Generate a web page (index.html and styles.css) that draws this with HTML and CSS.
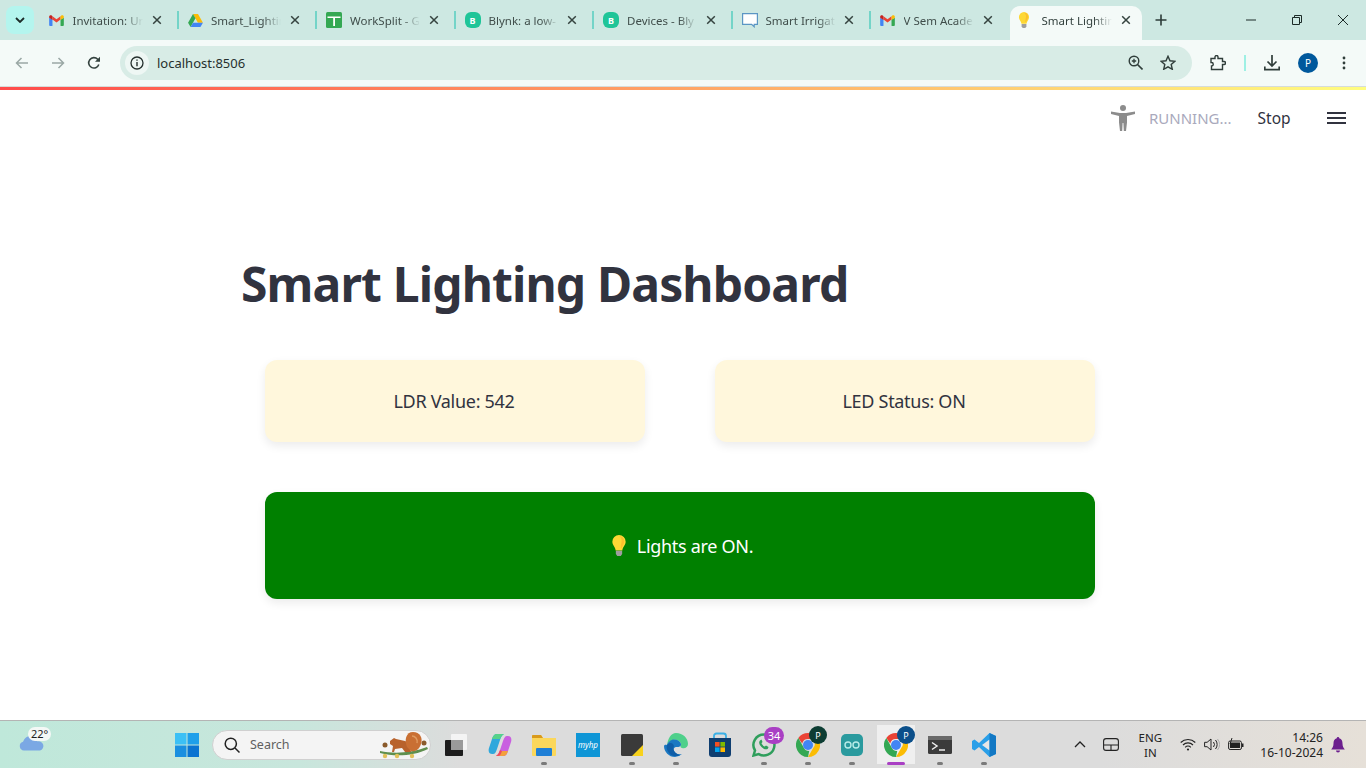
FILE: index.html
```html
<!DOCTYPE html>
<html lang="en">
<head>
  <meta charset="UTF-8">
  <meta name="viewport" content="width=device-width, initial-scale=1.0">
  <title>Smart Lighting Dashboard</title>
  <link rel="stylesheet" href="styles.css">
</head>
<body>
  <svg class="defs" width="0" height="0">
    <symbol id="gmail" viewBox="0 0 16 12">
      <path d="M0 3v8a1 1 0 0 0 1 1h2.600V5z" fill="#4285f4"/>
      <path d="M16 3v8a1 1 0 0 1-1 1h-2.600V5z" fill="#34a853"/>
      <path d="M3.600 5 8 8.200 12.400 5V1.400L8 4.600 3.600 1.400z" fill="#ea4335"/>
      <path d="M0 3 3.600 5.500V1.400L2.400.4C1.300-.3 0 .5 0 1.800z" fill="#c5221f"/>
      <path d="M16 3l-3.600 2.500V1.400l1.200-1C14.700-.3 16 .5 16 1.800z" fill="#fbbc04"/>
    </symbol>
    <symbol id="close" viewBox="0 0 10 10">
      <path d="M1.200 1.200l7.600 7.600M8.800 1.200 1.200 8.800" fill="none" stroke="currentColor" stroke-width="1.500"/>
    </symbol>
    <symbol id="bulb" viewBox="0 0 16 24">
      <path d="M8 0a7.600 7.600 0 0 0-7.600 7.700c0 4 3.400 5.600 3.800 10h7.600c.4-4.400 3.800-6 3.800-10A7.600 7.600 0 0 0 8 0z" fill="#fdd835"/>
      <path d="M8 1a6 6 0 0 1 6 6c0 3-2 5-3 8h-1C10 11 11 9 11 6c0-2-1.500-4-3-5z" fill="#fbc02d"/>
      <path d="M4.400 18h7.200v3.600L10 24H6l-1.600-2.400z" fill="#9e9e9e"/>
    </symbol>
    <symbol id="chrome" viewBox="0 0 24 24">
      <path d="M12 0a12 12 0 0 1 10.400 6H12a6 6 0 0 0-5.800 4.400L2.300 5A12 12 0 0 1 12 0z" fill="#ea4335"/>
      <path d="M22.400 6A12 12 0 0 1 12 24l5.200-9a6 6 0 0 0-.6-9z" fill="#fbbc04"/>
      <path d="M12 24A12 12 0 0 1 2.300 5l5.100 9a6 6 0 0 0 5.800 3.900z" fill="#34a853"/>
      <circle cx="12" cy="12" r="5" fill="#4285f4"/>
    </symbol>
  </svg>

  <header class="tabstrip">
    <button class="tab-search">
      <svg width="10" height="6" viewBox="0 0 10 6"><path d="M1 1l4 4 4-4" fill="none" stroke="#1c2b28" stroke-width="1.800"/></svg>
    </button>
    <div class="tabs">
      <div class="tab">
        <svg class="favicon" width="15" height="11"><use href="#gmail"/></svg>
        <span class="tab-title">Invitation: Ur</span>
        <svg class="tab-close" width="10" height="10"><use href="#close"/></svg>
      </div>
      <div class="tab">
        <svg class="favicon" width="15" height="13" viewBox="0 0 16 14">
          <path d="M5.300 0h5.400l5.300 9.300h-5.400z" fill="#fbbc04"/>
          <path d="M5.300 0 0 9.300 2.700 14l5.300-9.300z" fill="#34a853"/>
          <path d="M2.700 14h10.600L16 9.300H5.400z" fill="#4285f4"/>
        </svg>
        <span class="tab-title">Smart_Lightin</span>
        <svg class="tab-close" width="10" height="10"><use href="#close"/></svg>
      </div>
      <div class="tab">
        <svg class="favicon" width="16" height="16" viewBox="0 0 16 16">
          <rect width="16" height="16" rx="1.500" fill="#34a853"/>
          <path d="M1.500 4.500h13V6H9v8H7.200V6H1.500z" fill="#fff"/>
        </svg>
        <span class="tab-title">WorkSplit - G</span>
        <svg class="tab-close" width="10" height="10"><use href="#close"/></svg>
      </div>
      <div class="tab">
        <span class="favicon blynk">B</span>
        <span class="tab-title">Blynk: a low-</span>
        <svg class="tab-close" width="10" height="10"><use href="#close"/></svg>
      </div>
      <div class="tab">
        <span class="favicon blynk">B</span>
        <span class="tab-title">Devices - Bly</span>
        <svg class="tab-close" width="10" height="10"><use href="#close"/></svg>
      </div>
      <div class="tab">
        <svg class="favicon" width="16" height="16" viewBox="0 0 16 16">
          <path d="M.6 1.600h14.800v10.800h-3.200v2.400l-2.600-2.400H.6z" fill="#fff" stroke="#5b96c4" stroke-width="1.200"/>
        </svg>
        <span class="tab-title">Smart Irrigat</span>
        <svg class="tab-close" width="10" height="10"><use href="#close"/></svg>
      </div>
      <div class="tab">
        <svg class="favicon" width="15" height="11"><use href="#gmail"/></svg>
        <span class="tab-title">V Sem Acade</span>
        <svg class="tab-close" width="10" height="10"><use href="#close"/></svg>
      </div>
      <div class="tab active">
        <svg class="favicon" width="12" height="16"><use href="#bulb"/></svg>
        <span class="tab-title">Smart Lightin</span>
        <svg class="tab-close" width="10" height="10"><use href="#close"/></svg>
      </div>
    </div>
    <svg class="new-tab" width="12" height="12" viewBox="0 0 12 12"><path d="M6 .5v11M.500 6h11" stroke="#2c3b38" stroke-width="1.600"/></svg>
    <div class="window-controls">
      <svg width="10" height="10" viewBox="0 0 10 10"><path d="M0 5h10" stroke="#1c2b28"/></svg>
      <svg width="10" height="10" viewBox="0 0 10 10"><path d="M.5 2.500h7v7h-7zM2.500 2.500v-2h7v7h-2" fill="none" stroke="#1c2b28"/></svg>
      <svg width="10" height="10" viewBox="0 0 10 10"><path d="M0 0l10 10M10 0 0 10" stroke="#1c2b28"/></svg>
    </div>
  </header>

  <nav class="toolbar">
    <svg class="nav-btn" width="14" height="12" viewBox="0 0 14 12"><path d="M13 6H2M6.500 1 1.500 6l5 5" fill="none" stroke="#9aa8a5" stroke-width="1.500"/></svg>
    <svg class="nav-btn" width="14" height="12" viewBox="0 0 14 12"><path d="M1 6h11M7.500 1l5 5-5 5" fill="none" stroke="#9aa8a5" stroke-width="1.500"/></svg>
    <svg class="nav-btn" width="14" height="14" viewBox="0 0 14 14"><path d="M11.800 8.500A5.200 5.200 0 1 1 10.700 3.300L12 4.600" fill="none" stroke="#34423f" stroke-width="1.600"/><path d="M13 .8v5H8z" fill="#34423f"/></svg>
    <div class="omnibox">
      <span class="site-info">
        <svg width="14" height="14" viewBox="0 0 14 14"><circle cx="7" cy="7" r="6" fill="none" stroke="#25302e" stroke-width="1.300"/><path d="M7 6v4.300M7 3.400v1.400" stroke="#25302e" stroke-width="1.400"/></svg>
      </span>
      <span class="url">localhost:8506</span>
      <svg class="omni-icon" width="15" height="15" viewBox="0 0 15 15"><circle cx="6" cy="6" r="4.800" fill="none" stroke="#2f3d3a" stroke-width="1.400"/><path d="M9.500 9.500l5 5" stroke="#2f3d3a" stroke-width="1.600"/><path d="M6 3.800v4.400M3.800 6h4.400" stroke="#2f3d3a" stroke-width="1.300"/></svg>
      <svg class="omni-icon" width="16" height="15" viewBox="0 0 16 15"><path d="M8 1.300l2 4.500 4.900.5-3.700 3.200 1.100 4.800L8 11.800l-4.300 2.500 1.100-4.800L1.100 6.300 6 5.800z" fill="none" stroke="#2f3d3a" stroke-width="1.400"/></svg>
    </div>
    <svg class="ext-icon" width="16" height="16" viewBox="0 0 16 16"><path d="M1 3.500h4V2a1.500 1.500 0 0 1 3 0v1.500h4.500V6.500H14a1.500 1.500 0 0 1 0 3h-1.500v5H1.500V11a1.500 1.500 0 0 0 0-3.500H1z" fill="none" stroke="#2f3d3a" stroke-width="1.400"/></svg>
    <span class="toolbar-sep"></span>
    <svg class="download" width="16" height="16" viewBox="0 0 16 16"><path d="M8 0v10.500M3.500 6.500 8 11l4.500-4.500M.8 11.500v3.200h14.400v-3.200" fill="none" stroke="#2f3d3a" stroke-width="1.700"/></svg>
    <span class="avatar">P</span>
    <svg class="menu-dots" width="4" height="14" viewBox="0 0 4 14"><circle cx="2" cy="2" r="1.400" fill="#2f3d3a"/><circle cx="2" cy="7" r="1.400" fill="#2f3d3a"/><circle cx="2" cy="12" r="1.400" fill="#2f3d3a"/></svg>
  </nav>

  <main class="app">
    <div class="decoration"></div>
    <div class="app-header">
      <svg class="running-icon" width="24" height="26" viewBox="0 0 24 26">
        <circle cx="12" cy="3" r="3" fill="#8c8c8c"/>
        <path d="M0 6.500 9 8h6l9-1.500v2.600L16 11v6.500l-1 8.500h-2.200l-.4-8h-.8l-.4 8H9l-1-8.500V11L0 9.100z" fill="#8c8c8c"/>
      </svg>
      <span class="running">RUNNING...</span>
      <span class="stop">Stop</span>
      <span class="hamburger"><i></i><i></i><i></i></span>
    </div>
    <div class="block-container">
      <h1>Smart Lighting Dashboard</h1>
      <div class="dashboard">
        <div class="metrics">
          <div class="metric-card">LDR Value: 542</div>
          <div class="metric-card">LED Status: ON</div>
        </div>
        <div class="status-card">
          <svg width="14" height="21"><use href="#bulb"/></svg>
          <span>Lights are ON.</span>
        </div>
      </div>
    </div>
  </main>

  <footer class="taskbar">
    <div class="weather">
      <svg width="26" height="16" viewBox="0 0 26 16"><path d="M5 15.500a4.500 4.500 0 0 1-1-8.800C6 2 10 0 13 1c3 .8 5 3 5.500 5.500A4.600 4.600 0 0 1 21 15.500z" fill="#7ba8e4"/></svg>
      <span class="temp">22°</span>
    </div>
    <div class="task-icons">
      <span class="task-slot">
        <svg width="24" height="24" viewBox="0 0 24 24">
          <rect width="11.500" height="11.500" fill="#3cc0f5"/><rect x="12.500" width="11.500" height="11.500" fill="#1fa0ea"/>
          <rect y="12.500" width="11.500" height="11.500" fill="#1a8fe0"/><rect x="12.500" y="12.500" width="11.500" height="11.500" fill="#0b74d1"/>
        </svg>
      </span>
      <div class="search-box">
        <svg width="16" height="16" viewBox="0 0 16 16"><circle cx="6.800" cy="6.800" r="5.600" fill="none" stroke="#222" stroke-width="1.500"/><path d="M11 11l4.500 4.500" stroke="#222" stroke-width="1.500"/></svg>
        <span class="search-label">Search</span>
        <svg class="squirrel" width="50" height="28" viewBox="0 0 50 28">
          <path d="M1 20c14 3 32 2 47-4l1 2c-14 7-33 8-48 4z" fill="#5f8f4e"/>
          <circle cx="6" cy="14" r="2.500" fill="#8a5a2b"/><circle cx="45" cy="12" r="2.500" fill="#8a5a2b"/>
          <circle cx="6" cy="25" r="2.200" fill="#e2c15a"/><circle cx="18" cy="25" r="2.200" fill="#e2c15a"/><circle cx="33" cy="25" r="2.200" fill="#e2c15a"/>
          <path d="M11 10l4-3 2 1 9 2c3 1 5 3 5 6l1 5h-6l-3-4-7 1-1 3h-2l1-6-3-2z" fill="#b8622c"/>
          <path d="M28 16c-3-7-1-15 6-15s10 6 8 12-6 8-10 7z" fill="#c96f33"/>
          <path d="M33 5c3 0 6 3 5 7" fill="none" stroke="#e09a60" stroke-width="1.500"/>
        </svg>
      </div>
      <span class="task-slot">
        <svg width="24" height="24" viewBox="0 0 24 24">
          <rect x="7" y="1" width="16" height="16" rx="1" fill="#f4f4f4"/>
          <rect x="1" y="7" width="18" height="16" rx="1" fill="#1d1d1d"/>
          <rect x="7" y="7" width="12" height="10" fill="#9a9a9a"/>
        </svg>
      </span>
      <span class="task-slot">
        <svg width="24" height="24" viewBox="0 0 24 24">
          <path d="M9 1h7c-2 1-3 3-4 6l-3 9c-1 3-2 5-4 5H4c-3 0-4-3-3-6l3-9c1-3 2-5 5-5z" fill="#2fa8dc"/>
          <path d="M9 1h7c-2 1-3 3-4 5H4C5 3 6 1 9 1z" fill="#57d28a"/>
          <path d="M15 23H8c2-1 3-3 4-6l3-9c1-3 2-5 4-5h1c3 0 4 3 3 6l-3 9c-1 3-2 5-5 5z" fill="#c95fe0"/>
          <path d="M15 23H8c2-1 3-3 4-5h8c-1 3-2 5-5 5z" fill="#f3a03c"/>
          <path d="M8 23c2-1 3-3 4-6l2 1c-1 3-2 5-4 5z" fill="#ee4a62"/>
        </svg>
      </span>
      <span class="task-slot has-dot">
        <svg width="24" height="24" viewBox="0 0 24 24">
          <path d="M0 3a1 1 0 0 1 1-1h8l2 3h13v17a1 1 0 0 1-1 1H1a1 1 0 0 1-1-1z" fill="#fbd75b"/>
          <path d="M0 3a1 1 0 0 1 1-1h8l2 3H0z" fill="#d99a1c"/>
          <rect x="4" y="15" width="16" height="8" rx="1" fill="#1f7fd6"/>
        </svg>
      </span>
      <span class="task-slot">
        <span class="myhp">myhp</span>
      </span>
      <span class="task-slot has-dot">
        <svg width="22" height="22" viewBox="0 0 22 22">
          <rect width="22" height="22" rx="1.500" fill="#3a3a3a"/>
          <path d="M11 22 22 11v11z" fill="#f8d21c"/>
        </svg>
      </span>
      <span class="task-slot has-dot">
        <svg width="24" height="24" viewBox="0 0 24 24">
          <path d="M12 0c7 0 12 5 12 11 0 3-3 5-6 4-2-.5-2-2-1-4-1-3-4-5-8-4-3 .8-5 3-6 5C4 5 7 0 12 0z" fill="#4fd08b"/>
          <path d="M3 12c1-3 4-6 8-5.500 3 .4 6 2.500 6 5 0 2-2 2.500-4 2.500-3 0-4 2-3 4s3 4 8 3a12 12 0 0 1-7 3C5 24 0 19 0 13c0-.5 1-1.500 3-1z" fill="#1a78c2"/>
          <path d="M3 12c3-3 6-2.500 7 1-2 3 1 8 6 9-2 1.500-8 2-11-2-2-2.500-3-5.500-2-8z" fill="#0f5ea8"/>
        </svg>
      </span>
      <span class="task-slot">
        <svg width="24" height="26" viewBox="0 0 24 26">
          <path d="M6 7V4a2.500 2.500 0 0 1 2.500-2.500h7A2.500 2.500 0 0 1 18 4v3" fill="none" stroke="#3ab0e6" stroke-width="1.800"/>
          <path d="M1 6h22v16a3 3 0 0 1-3 3H4a3 3 0 0 1-3-3z" fill="#0f3e70"/>
          <rect x="7" y="10" width="4.600" height="4.600" fill="#f25022"/><rect x="12.400" y="10" width="4.600" height="4.600" fill="#7fba00"/>
          <rect x="7" y="15.400" width="4.600" height="4.600" fill="#00a4ef"/><rect x="12.400" y="15.400" width="4.600" height="4.600" fill="#ffb900"/>
        </svg>
      </span>
      <span class="task-slot has-dot">
        <svg width="24" height="24" viewBox="0 0 24 24">
          <path d="M12 1.500A10.500 10.500 0 0 0 3 17.500L1.500 22.500l5.200-1.400A10.500 10.500 0 1 0 12 1.500z" fill="none" stroke="#2f9e5c" stroke-width="2.500"/>
          <path d="M8 7.500c-1.500 1.500-1 4 1.500 6.500s5 3 6.500 1.500l.5-1.500-2.500-1.500-1.200 1c-1.500-.5-2.800-2-3.300-3.300l1-1.200L9.500 6.500z" fill="#2f9e5c"/>
        </svg>
        <span class="badge count">34</span>
      </span>
      <span class="task-slot has-dot">
        <svg width="24" height="24"><use href="#chrome"/></svg>
        <span class="badge profile dark">P</span>
      </span>
      <span class="task-slot has-dot">
        <span class="arduino">
          <svg width="16" height="8" viewBox="0 0 16 8"><circle cx="4" cy="4" r="3" fill="none" stroke="#b7ece8" stroke-width="1.400"/><circle cx="12" cy="4" r="3" fill="none" stroke="#b7ece8" stroke-width="1.400"/></svg>
        </span>
      </span>
      <span class="task-slot has-dot active-app">
        <svg width="24" height="24"><use href="#chrome"/></svg>
        <span class="badge profile blue">P</span>
      </span>
      <span class="task-slot has-dot">
        <svg width="24" height="18" viewBox="0 0 24 18">
          <rect width="24" height="18" rx="1.500" fill="#3b3b3b"/>
          <rect width="24" height="4" fill="#6a6a6a"/>
          <path d="M4 6.500 9 10l-5 3.500" fill="none" stroke="#eee" stroke-width="1.500"/>
          <path d="M11 14h6" stroke="#eee" stroke-width="1.500"/>
        </svg>
      </span>
      <span class="task-slot has-dot">
        <svg width="24" height="24" viewBox="0 0 24 24">
          <path d="M17.500 0 24 3v18l-6.500 3L7 14l-4.500 3.500L0 16V8l2.500-1.500L7 10z" fill="#2a9fe8"/>
          <path d="M17.500 6.500 10 12l7.500 5.500z" fill="#e6e6e6"/>
          <path d="M17.500 0 24 3v18l-6.500 3z" fill="#1278c4"/>
        </svg>
      </span>
    </div>
    <div class="tray">
      <svg class="tray-chevron" width="12" height="7" viewBox="0 0 12 7"><path d="M1 6l5-5 5 5" fill="none" stroke="#222" stroke-width="1.300"/></svg>
      <svg class="tray-pad" width="16" height="13" viewBox="0 0 16 13"><rect x=".6" y=".6" width="14.800" height="11.800" rx="2.500" fill="none" stroke="#222" stroke-width="1.100"/><path d="M1 7h14M8 7v5" stroke="#222" stroke-width="1.100"/></svg>
      <div class="lang">ENG<br>IN</div>
      <svg class="tray-wifi" width="16" height="13" viewBox="0 0 16 13"><path d="M.7 4.500a10.500 10.500 0 0 1 14.600 0M3 7a7 7 0 0 1 10 0M5.200 9.300a3.800 3.800 0 0 1 5.600 0" fill="none" stroke="#222" stroke-width="1.100"/><circle cx="8" cy="11.500" r="1.100" fill="#222"/></svg>
      <svg class="tray-sound" width="16" height="13" viewBox="0 0 16 13"><path d="M.6 4.300h2.500L7 1v11L3.100 8.700H.6z" fill="none" stroke="#222"/><path d="M9.500 4a4 4 0 0 1 0 5M11.500 2a7 7 0 0 1 0 9" fill="none" stroke="#222"/><path d="M13.500 1a9 9 0 0 1 0 11" fill="none" stroke="#aaa"/></svg>
      <svg class="tray-battery" width="16" height="13" viewBox="0 0 16 13"><rect x=".6" y="3" width="12.800" height="8.500" rx="1.500" fill="none" stroke="#222"/><rect x="2" y="4.500" width="10" height="5.500" fill="#222"/><rect x="14" y="5.500" width="1.500" height="3.500" fill="#222"/><path d="M4 0 2 6h2l-1 3" fill="none" stroke="#222"/></svg>
      <div class="clock">14:26<br>16-10-2024</div>
      <svg class="tray-bell" width="14" height="16" viewBox="0 0 14 16"><path d="M7 0a1.200 1.200 0 0 1 1.200 1.300C10.800 2 11.500 4 11.500 6.500c0 3 1 4.500 2.300 6H.2c1.300-1.500 2.300-3 2.300-6C2.500 4 3.200 2 5.800 1.300A1.200 1.200 0 0 1 7 0zM5 13.500h4a2 2 0 0 1-4 0z" fill="#6c1f8e"/></svg>
    </div>
  </footer>
</body>
</html>
```

FILE: styles.css
```css
* {
  box-sizing: border-box;
}
html, body {
  height: 100%;
}
body {
  margin: 0;
  height: 768px;
  overflow: hidden;
  display: flex;
  flex-direction: column;
  font-family: "Noto Sans", sans-serif;
  background-color: white;
}
.defs {
  position: absolute;
}
svg {
  display: block;
  flex: none;
}

/* browser tabs */
.tabstrip {
  height: 40px;
  flex: none;
  display: flex;
  align-items: flex-start;
  background-color: #cde8e2;
  padding-left: 6px;
}
.tab-search {
  width: 28px;
  height: 28px;
  margin-top: 6px;
  border: none;
  padding: 0;
  border-radius: 8px;
  background-color: #b4f5ee;
  display: flex;
  align-items: center;
  justify-content: center;
}
.tabs {
  display: flex;
  margin-left: 5px;
  margin-top: 6px;
  height: 34px;
}
.tab {
  width: 138.500px;
  height: 34px;
  flex: none;
  display: flex;
  align-items: center;
  padding: 0 16px 6px 10px;
  position: relative;
  font-size: 11.500px;
  color: #3f4d4a;
}
.tab + .tab::before {
  content: "";
  position: absolute;
  left: -1px;
  top: 5px;
  width: 2px;
  height: 18px;
  background-color: #74d4c8;
}
.tab.active {
  width: 132px;
  margin-left: 1px;
  padding: 0 11px 6px 8px;
  background-color: #f4faf8;
  border-radius: 10px 10px 0 0;
  color: #33413e;
}
.tab.active::before {
  display: none;
}
.favicon {
  flex: none;
  margin-right: 8px;
}
.tab:nth-child(-n+2) .favicon,
.tab:nth-child(7) .favicon {
  margin-right: 8.500px;
}
.tab.active .favicon {
  margin-right: 12px;
}
.blynk {
  width: 16px;
  height: 16px;
  border-radius: 6px;
  background-color: #1fc598;
  color: white;
  font-size: 9px;
  font-weight: bold;
  display: flex;
  align-items: center;
  justify-content: center;
}
.tab-title {
  flex: 1;
  min-width: 0;
  white-space: nowrap;
  -webkit-mask-image: linear-gradient(90deg, black 52px, transparent 70px);
  mask-image: linear-gradient(90deg, black 52px, transparent 70px);
}
.tab-close {
  color: #35433f;
}
.new-tab {
  margin: 14px 0 0 13px;
}
.window-controls {
  margin-left: auto;
  display: flex;
  gap: 36px;
  padding: 15px 18px 0 0;
}

/* browser toolbar */
.toolbar {
  height: 47px;
  flex: none;
  display: flex;
  align-items: center;
  background-color: #f4faf8;
  border-bottom: 1px solid #d6dcda;
  padding: 0 18px 1px 15px;
}
.nav-btn {
  margin-right: 22px;
}
.omnibox {
  width: 1072px;
  height: 34px;
  margin-left: -3px;
  border-radius: 17px;
  background-color: #d8ece6;
  display: flex;
  align-items: center;
  padding: 0 16px 0 5px;
}
.site-info {
  width: 24px;
  height: 24px;
  border-radius: 50%;
  background-color: #eef7f4;
  display: flex;
  align-items: center;
  justify-content: center;
}
.url {
  margin-left: 8px;
  font-size: 13px;
  color: #26302e;
  flex: 1;
}
.omni-icon {
  margin-left: 17px;
}
.ext-icon {
  margin-left: 18px;
}
.toolbar-sep {
  width: 2px;
  height: 16px;
  margin-left: 18px;
  background-color: #9ef0e4;
}
.download {
  margin-left: 18px;
}
.avatar {
  width: 20px;
  height: 20px;
  margin-left: 18px;
  border-radius: 50%;
  background-color: #00589c;
  color: white;
  font-size: 10px;
  display: flex;
  align-items: center;
  justify-content: center;
}
.menu-dots {
  margin-left: 24px;
}

/* streamlit page */
.app {
  flex: 1;
  min-height: 0;
  background-color: white;
  color: #31333f;
}
.decoration {
  height: 3px;
  background-image: linear-gradient(90deg, #ff4b4b, #fffd80);
}
.app-header {
  height: 56px;
  display: flex;
  align-items: center;
  padding: 0 20px 0 1111px;
}
.running {
  margin-left: 14px;
  font-size: 15px;
  color: #a9a9bc;
}
.stop {
  margin-left: 26px;
  font-size: 15.500px;
}
.hamburger {
  margin-left: 36px;
  width: 19px;
  display: flex;
  flex-direction: column;
  gap: 2.500px;
}
.hamburger i {
  display: block;
  height: 2.500px;
  background-color: #31333f;
}
.block-container {
  width: 884px;
  margin: 0 auto;
  padding-top: 103px;
}
h1 {
  margin: 0;
  font-size: 48px;
  line-height: 70px;
  font-weight: 700;
  letter-spacing: -0.850px;
}
.dashboard {
  width: 830px;
  margin: 41px 0 0 24px;
}
.metrics {
  display: grid;
  grid-template-columns: 380px 380px;
  column-gap: 70px;
}
.metric-card {
  height: 82px;
  border-radius: 12px;
  background-color: #fff7dc;
  box-shadow: 0 4px 10px rgba(0, 0, 0, 0.08);
  display: flex;
  align-items: center;
  justify-content: center;
  padding-right: 2px;
  font-size: 18px;
  letter-spacing: -0.300px;
}
.status-card {
  height: 107px;
  margin-top: 50px;
  border-radius: 12px;
  background-color: #008000;
  color: white;
  box-shadow: 0 4px 10px rgba(0, 0, 0, 0.08);
  display: flex;
  align-items: center;
  justify-content: center;
  gap: 11px;
  padding-left: 5px;
  font-size: 18px;
  letter-spacing: -0.300px;
}

/* windows taskbar */
.taskbar {
  height: 48px;
  flex: none;
  display: flex;
  align-items: center;
  border-top: 1px solid #b4b4b4;
  background-image: linear-gradient(90deg, #bfe8da 0, #c8e6dc 300px, #dcdcdc 460px, #dcdcdc 1100px, #e6e0d8 100%);
  font-size: 12px;
  color: #222;
}
.weather {
  width: 165px;
  height: 47px;
  flex: none;
  position: relative;
  padding: 14px 0 0 19px;
}
.temp {
  position: absolute;
  left: 28px;
  top: 6px;
  padding: 0 3px;
  font-size: 11px;
  line-height: 14px;
  border-radius: 7px;
  background-color: #f4f8f6;
}
.task-icons {
  display: flex;
  align-items: center;
  height: 47px;
}
.task-slot {
  width: 44px;
  height: 47px;
  flex: none;
  display: flex;
  align-items: center;
  justify-content: center;
  position: relative;
}
.has-dot::after {
  content: "";
  position: absolute;
  left: 19px;
  bottom: 3px;
  width: 6px;
  height: 3px;
  border-radius: 2px;
  background-color: #7a7a7a;
}
.active-app {
  background-image: linear-gradient(#efefef, #efefef);
  background-size: 38px 39px;
  background-position: center 4px;
  background-repeat: no-repeat;
}
.active-app::after {
  left: 13px;
  width: 18px;
  background-color: #a93fc4;
}
.search-box {
  width: 219px;
  height: 30px;
  margin: 0 3px 0 3px;
  border-radius: 15px;
  background-color: #f4f4f4;
  border: 1px solid #d0d0d0;
  display: flex;
  align-items: center;
  padding: 0 1px 0 11px;
}
.search-label {
  margin-left: 10px;
  font-size: 12.500px;
  color: #5f5f5f;
  flex: 1;
}
.myhp {
  width: 24px;
  height: 24px;
  background-color: #0f96d6;
  color: white;
  font-size: 8px;
  font-style: italic;
  display: flex;
  align-items: center;
  justify-content: center;
}
.arduino {
  width: 22px;
  height: 22px;
  border-radius: 5px;
  background-color: #2a9a9e;
  display: flex;
  align-items: center;
  justify-content: center;
}
.badge {
  position: absolute;
  display: flex;
  align-items: center;
  justify-content: center;
  color: white;
  border-radius: 50%;
}
.badge.count {
  left: 22px;
  top: 6px;
  width: 20px;
  height: 17px;
  border-radius: 9px;
  background-color: #a93fc4;
  font-size: 11px;
}
.badge.profile {
  left: 23px;
  top: 5px;
  width: 18px;
  height: 18px;
  font-size: 9px;
}
.badge.dark {
  background-color: #0d3d33;
}
.badge.blue {
  background-color: #0b4f8a;
}
.tray {
  margin-left: auto;
  height: 47px;
  display: flex;
  align-items: center;
  padding-right: 21px;
  font-size: 11.500px;
}
.tray-pad {
  margin-left: 17px;
}
.lang {
  width: 40px;
  margin-left: 11px;
  text-align: center;
  line-height: 15px;
}
.tray-wifi {
  margin-left: 10px;
}
.tray-sound {
  margin-left: 8px;
}
.tray-battery {
  margin-left: 8px;
}
.clock {
  margin-left: 16px;
  text-align: right;
  line-height: 15px;
  font-size: 12px;
}
.tray-bell {
  margin-left: 8px;
}
```
